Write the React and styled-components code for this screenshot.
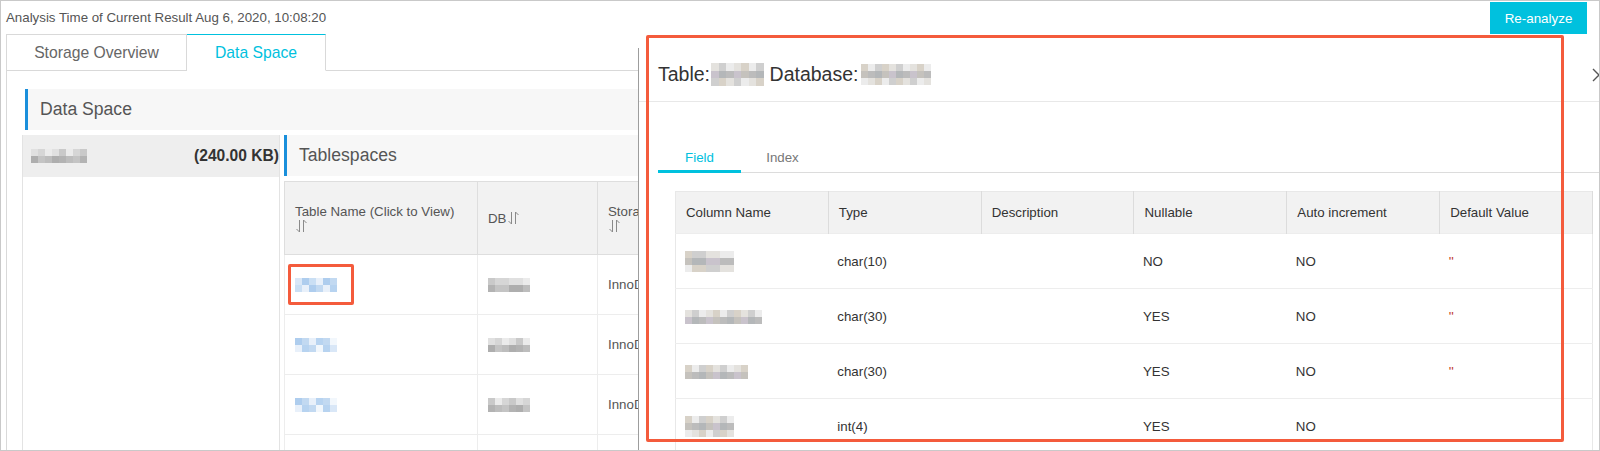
import React from 'react';
import styled, { createGlobalStyle, css } from 'styled-components';

const FONT = '"Liberation Sans", Arial, sans-serif';
const CYAN = '#00c1de';
const BLUE = '#1a8fdb';
const MARK = '#f45b3c';

const GlobalStyle = createGlobalStyle`
  html, body { margin: 0; padding: 0; background: #fff; overflow: hidden; }
  body { font-family: ${FONT}; }
  *, *::before, *::after { box-sizing: border-box; }
`;

const Frame = styled.div`
  position: relative;
  width: 1600px;
  height: 451px;
  border: 1px solid #c9c9c9;
  overflow: hidden;
  background: #fff;
  font-family: ${FONT};
  display: flex;
  flex-direction: column;
`;

const TopBar = styled.header`
  flex: none;
  height: 33px;
  display: flex;
  align-items: center;
  justify-content: space-between;
  padding: 0 12px 0 5px;
`;

const AnalysisTime = styled.span`
  font-size: 13.3px;
  color: #555;
`;

const PrimaryButton = styled.button`
  align-self: flex-end;
  width: 97px;
  height: 32px;
  border: none;
  background: ${CYAN};
  color: #fff;
  font-family: ${FONT};
  font-size: 13.4px;
  padding: 0;
`;

const TabBar = styled.nav`
  flex: none;
  height: 37px;
  margin-left: 5px;
  display: flex;
`;

const Tab = styled.div`
  width: ${p => p.$w}px;
  display: flex;
  align-items: center;
  justify-content: center;
  font-size: 15.7px;
  color: #666;
  background: #fff;
  border: 1px solid #d9d9d9;
  border-left-width: ${p => (p.$first ? 1 : 0)}px;
  ${p => p.$active && css`
    color: ${CYAN};
    border-top: 1px solid ${CYAN};
    border-bottom-color: transparent;
  `}
`;

const TabFill = styled.div`
  flex: 1;
  border-bottom: 1px solid #d9d9d9;
`;

const TabPanel = styled.section`
  flex: 1;
  min-height: 0;
  margin-left: 5px;
  border-left: 1px solid #d9d9d9;
  padding: 18px 0 0 15px;
  display: flex;
  flex-direction: column;
`;

const SectionTitle = styled.h3`
  flex: none;
  margin: 0 0 0 ${p => p.$indent || 0}px;
  height: 41px;
  display: flex;
  align-items: center;
  padding-left: 12px;
  background: #f7f7f7;
  border-left: 3px solid ${BLUE};
  font-size: 17.6px;
  font-weight: normal;
  color: #555;
`;

const SplitBody = styled.div`
  flex: 1;
  min-height: 0;
  margin-top: 5px;
  display: flex;
  gap: 4px;
`;

const DbList = styled.aside`
  flex: none;
  width: 258px;
  border-left: 1px solid #e3e3e3;
  border-right: 1px solid #e3e3e3;
`;

const DbItem = styled.div`
  height: 42px;
  background: #eee;
  display: flex;
  align-items: center;
  justify-content: space-between;
  padding-left: 8px;
`;

const DbSize = styled.span`
  font-weight: bold;
  font-size: 15.6px;
  color: #333;
`;

const MainColumn = styled.div`
  flex: 1;
  min-width: 0;
  display: flex;
  flex-direction: column;
`;

const TableWrap = styled.div`
  margin-top: 5px;
`;

const DataTable = styled.table`
  width: 513px;
  table-layout: fixed;
  border-collapse: collapse;
`;

const Col = styled.col`
  width: ${p => p.$w}px;
`;

const HeadCell = styled.th`
  height: 73px;
  padding: 0 10px;
  background: #f2f2f2;
  border: 1px solid #dedede;
  text-align: left;
  vertical-align: middle;
  font-weight: normal;
  font-size: 13.3px;
  line-height: 15px;
  color: #555;
  white-space: nowrap;
  overflow: hidden;
`;

const BodyCell = styled.td`
  height: 60px;
  padding: 0 10px;
  border: 1px solid #ededed;
  font-size: 13.3px;
  color: #555;
  vertical-align: middle;
  white-space: nowrap;
  overflow: hidden;
`;

const SortSvg = styled.svg`
  display: ${p => (p.$block ? 'block' : 'inline-block')};
  vertical-align: -2px;
  margin-left: ${p => (p.$block ? 0 : 1)}px;
`;

function SortIcon({ block }) {
  return (
    <SortSvg $block={block} width="12" height="14" viewBox="0 0 12 14">
      <g fill="none" stroke="#8a8a8a" strokeWidth="1">
        <path d="M4.5 1v12M1.5 10l3 3" />
        <path d="M8.5 13V1M8.5 1l3 3" />
      </g>
    </SortSvg>
  );
}

/* pixelated (blurred) placeholders */
const PixelGrid = styled.span`
  display: inline-grid;
  grid-template-columns: repeat(${p => p.$cols}, ${p => p.$size}px);
  grid-auto-rows: ${p => p.$size}px;
  vertical-align: middle;
  margin-left: ${p => p.$ml || 0}px;
`;

const Pixel = styled.span`
  background: ${p => p.$c};
`;

const GRAY = ['#c9c9c9', '#bdbdbd', '#d6d6d6', '#b3b3b3', '#e0e0e0', '#c4c4c4', '#ebebeb', '#aeaeae'];
const BLUEP = ['#c2d9f1', '#aecdee', '#d9e7f7', '#b7d3f0', '#e8f0fa', '#cadff4', '#f2f7fc'];
const WARM = ['#d8d2c8', '#bcbcbc', '#cfcfcf', '#c5c2bd', '#e4e2de', '#b4b7b9', '#ececec', '#c9c3cc'];

function Blur({ cols, rows, palette, seed = 1, size = 7, ml }) {
  const cells = [];
  for (let r = 0; r < rows; r++) {
    for (let c = 0; c < cols; c++) {
      const k = (c * 5 + r * 3 + seed * 7 + ((c * c + seed) % 4)) % palette.length;
      cells.push(<Pixel key={`${r}-${c}`} $c={palette[k]} />);
    }
  }
  return (
    <PixelGrid $cols={cols} $size={size} $ml={ml}>
      {cells}
    </PixelGrid>
  );
}

/* drawer */
const Drawer = styled.aside`
  position: absolute;
  left: 637px;
  top: 47px;
  bottom: 0;
  width: 985px;
  z-index: 2;
  background: #fff;
  border-left: 1px solid #9d9d9d;
  display: flex;
  flex-direction: column;
`;

const DrawerHeader = styled.div`
  flex: none;
  height: 54px;
  border-bottom: 1px solid #e8e8e8;
  display: flex;
  align-items: center;
  justify-content: space-between;
  padding: 0 17px 0 19px;
`;

const DrawerTitle = styled.h2`
  margin: 0;
  display: flex;
  align-items: center;
  font-size: 19.5px;
  font-weight: normal;
  color: #333;
`;

const TitleGap = styled.span`
  width: 6px;
`;

const CloseButton = styled.span`
  display: flex;
  width: 14px;
  height: 14px;
`;

const TabStrip = styled.div`
  flex: none;
  margin: 41px 0 0 19px;
  display: flex;
  border-bottom: 1px solid #dcdcdc;
`;

const DrawerTab = styled.div`
  width: 83px;
  height: 30px;
  margin-bottom: -1px;
  line-height: 30px;
  text-align: center;
  font-size: 13.3px;
  color: ${p => (p.$active ? CYAN : '#777')};
  box-shadow: ${p => (p.$active ? `inset 0 -3px 0 ${CYAN}` : 'none')};
`;

const FieldTableWrap = styled.div`
  margin: 18px 0 0 36px;
`;

const FieldTable = styled.table`
  width: 918px;
  table-layout: fixed;
  border-collapse: collapse;
  border: 1px solid #e8e8e8;
`;

const FieldHead = styled.th`
  height: 42px;
  padding: 0 10px;
  background: #f2f2f2;
  border-right: 1px solid #dcdcdc;
  text-align: left;
  font-weight: normal;
  font-size: 13.3px;
  color: #333;
`;

const FieldCell = styled.td`
  height: 55px;
  padding: 0 9px;
  border-top: 1px solid #ededed;
  font-size: 13.3px;
  color: #333;
  vertical-align: middle;
  white-space: nowrap;
`;

const EmptyQuote = styled.span`
  color: #c0392b;
`;

/* annotation overlays */
const Highlight = styled.div`
  position: absolute;
  z-index: 5;
  pointer-events: none;
  border: 3px solid ${MARK};
  border-radius: 2px;
`;

const DrawerHighlight = styled(Highlight)`
  left: 645px;
  top: 34px;
  width: 918px;
  height: 407px;
`;

const LinkHighlight = styled(Highlight)`
  left: 287px;
  top: 263px;
  width: 66px;
  height: 41px;
`;

const tableRows = [
  { seed: 2, db: 3, cols: 6, engine: 'InnoDB' },
  { seed: 5, db: 6, cols: 6, engine: 'InnoDB' },
  { seed: 9, db: 1, cols: 6, engine: 'InnoDB' },
  { seed: 4, db: 8, cols: 6, engine: '' },
];

const fieldRows = [
  { name: { cols: 7, rows: 3, seed: 3 }, type: 'char(10)', nullable: 'NO', auto: 'NO', def: true },
  { name: { cols: 11, rows: 2, seed: 6 }, type: 'char(30)', nullable: 'YES', auto: 'NO', def: true },
  { name: { cols: 9, rows: 2, seed: 2 }, type: 'char(30)', nullable: 'YES', auto: 'NO', def: true },
  { name: { cols: 7, rows: 3, seed: 8 }, type: 'int(4)', nullable: 'YES', auto: 'NO', def: false },
];

const fieldColumns = ['Column Name', 'Type', 'Description', 'Nullable', 'Auto increment', 'Default Value'];

export default function App() {
  return (
    <>
      <GlobalStyle />
      <Frame>
        <TopBar>
          <AnalysisTime>Analysis Time of Current Result Aug 6, 2020, 10:08:20</AnalysisTime>
          <PrimaryButton>Re-analyze</PrimaryButton>
        </TopBar>

        <TabBar>
          <Tab $w={181} $first>Storage Overview</Tab>
          <Tab $w={139} $active>Data Space</Tab>
          <TabFill />
        </TabBar>

        <TabPanel>
          <SectionTitle $indent={3}>Data Space</SectionTitle>
          <SplitBody>
            <DbList>
              <DbItem>
                <Blur cols={8} rows={2} palette={GRAY} seed={4} />
                <DbSize>(240.00 KB)</DbSize>
              </DbItem>
            </DbList>
            <MainColumn>
              <SectionTitle>Tablespaces</SectionTitle>
              <TableWrap>
                <DataTable>
                  <colgroup>
                    <Col $w={193} />
                    <Col $w={120} />
                    <Col $w={200} />
                  </colgroup>
                  <thead>
                    <tr>
                      <HeadCell>Table Name (Click to View)<SortIcon block /></HeadCell>
                      <HeadCell>DB<SortIcon /></HeadCell>
                      <HeadCell>Storage Engine<SortIcon block /></HeadCell>
                    </tr>
                  </thead>
                  <tbody>
                    {tableRows.map((r, i) => (
                      <tr key={i}>
                        <BodyCell><Blur cols={r.cols} rows={2} palette={BLUEP} seed={r.seed} /></BodyCell>
                        <BodyCell><Blur cols={6} rows={2} palette={GRAY} seed={r.db} /></BodyCell>
                        <BodyCell>{r.engine}</BodyCell>
                      </tr>
                    ))}
                  </tbody>
                </DataTable>
              </TableWrap>
            </MainColumn>
          </SplitBody>
        </TabPanel>

        <Drawer>
          <DrawerHeader>
            <DrawerTitle>
              Table:<Blur cols={7} rows={3} palette={WARM} seed={5} size={7.5} ml={1} />
              <TitleGap />
              Database:<Blur cols={10} rows={3} palette={WARM} seed={2} ml={3} />
            </DrawerTitle>
            <CloseButton>
              <svg width="14" height="14" viewBox="0 0 14 14">
                <path d="M1 1l12 12M13 1L1 13" stroke="#555" strokeWidth="1.4" fill="none" />
              </svg>
            </CloseButton>
          </DrawerHeader>
          <TabStrip>
            <DrawerTab $active>Field</DrawerTab>
            <DrawerTab>Index</DrawerTab>
          </TabStrip>
          <FieldTableWrap>
            <FieldTable>
              <thead>
                <tr>
                  {fieldColumns.map(c => <FieldHead key={c}>{c}</FieldHead>)}
                </tr>
              </thead>
              <tbody>
                {fieldRows.map((r, i) => (
                  <tr key={i}>
                    <FieldCell><Blur cols={r.name.cols} rows={r.name.rows} palette={WARM} seed={r.name.seed} /></FieldCell>
                    <FieldCell>{r.type}</FieldCell>
                    <FieldCell />
                    <FieldCell>{r.nullable}</FieldCell>
                    <FieldCell>{r.auto}</FieldCell>
                    <FieldCell>{r.def && <EmptyQuote>''</EmptyQuote>}</FieldCell>
                  </tr>
                ))}
              </tbody>
            </FieldTable>
          </FieldTableWrap>
        </Drawer>

        <DrawerHighlight />
        <LinkHighlight />
      </Frame>
    </>
  );
}
